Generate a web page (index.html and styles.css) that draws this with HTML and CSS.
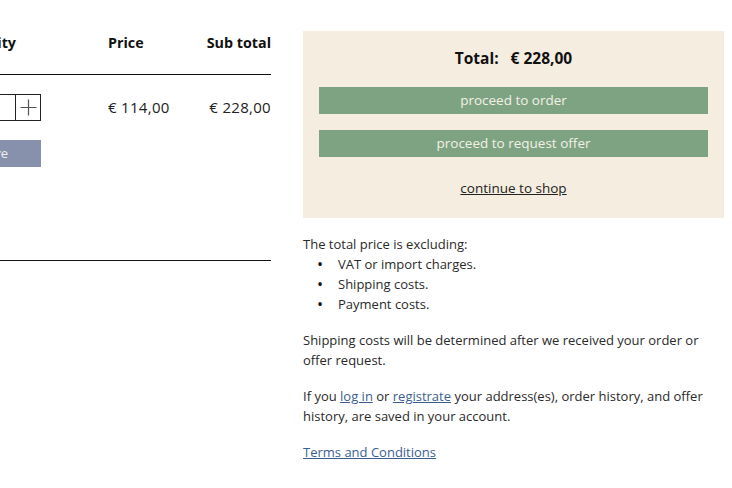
FILE: index.html
```html
<!DOCTYPE html>
<html>
<head>
<meta charset="utf-8">
<link rel="stylesheet" href="styles.css">
</head>
<body>
<div class="page">
  <div class="cart">
    <div class="cart-head">
      <div class="col-qty">Quantity</div>
      <div class="col-price">Price</div>
      <div class="col-sub">Sub total</div>
    </div>
    <div class="cart-row">
      <div class="col-qty">
        <div class="qty-wrap">
          <div class="qty">
            <span class="qty-btn qty-minus">&minus;</span>
            <span class="qty-input">2</span>
            <span class="qty-btn qty-plus"><svg width="17" height="17" viewBox="0 0 17 17"><path d="M8.5 0.5V16.5M0.5 8.5H16.5" stroke="#555" stroke-width="1.2" fill="none"/></svg></span>
          </div>
          <button class="remove">remove</button>
        </div>
      </div>
      <div class="col-price">€ 114,00</div>
      <div class="col-sub">€ 228,00</div>
    </div>
  </div>
  <div class="side">
    <div class="summary">
      <div class="total"><span>Total:</span><span>€ 228,00</span></div>
      <button class="btn-green">proceed to order</button>
      <button class="btn-green">proceed to request offer</button>
      <a class="continue" href="#">continue to shop</a>
    </div>
    <div class="info">
      <p class="intro">The total price is excluding:</p>
      <ul>
        <li>VAT or import charges.</li>
        <li>Shipping costs.</li>
        <li>Payment costs.</li>
      </ul>
      <p>Shipping costs will be determined after we received your order or offer request.</p>
      <p>If you <a href="#">log in</a> or <a href="#">registrate</a> your address(es), order history, and offer history, are saved in your account.</p>
      <p><a href="#">Terms and Conditions</a></p>
    </div>
  </div>
</div>
</body>
</html>
```
FILE: styles.css
```css
html, body {
  margin: 0;
  padding: 0;
  background: #fff;
  overflow: hidden;
}
body {
  font-family: "Open Sans", Arial, sans-serif;
  color: #222;
}
.page {
  display: flex;
  align-items: flex-start;
  padding-top: 31px;
}
.cart {
  width: 331px;
  margin-left: -60px;
  flex: none;
  border-bottom: 1px solid #111;
  height: 229px;
}
.cart-head, .cart-row {
  display: grid;
  grid-template-columns: 168px 97px 66px;
}
.cart-head {
  font-weight: 700;
  font-size: 14.3px;
  line-height: 22px;
  height: 42px;
  padding-top: 1px;
  border-bottom: 1px solid #111;
  color: #111;
}
.cart-head .col-qty {
  text-align: right;
  padding-right: 92px;
}
.cart-head .col-sub, .cart-row .col-sub {
  text-align: right;
  white-space: nowrap;
}
.cart-row {
  padding-top: 19px;
  font-size: 15px;
  line-height: 22px;
  color: #222;
}
.cart-row .col-price, .cart-row .col-sub {
  padding-top: 2px;
  white-space: nowrap;
  letter-spacing: 0.3px;
}
.qty-wrap {
  width: 101px;
}
.qty {
  display: flex;
  height: 27px;
}
.qty-btn, .qty-input {
  box-sizing: border-box;
  border: 1px solid #222;
  display: flex;
  align-items: center;
  justify-content: center;
  font-size: 14px;
}
.qty-minus { width: 30px; }
.qty-input { width: 47px; border-left: none; }
.qty-plus { width: 25px; border-left: none; }
.remove {
  display: block;
  margin-top: 19px;
  width: 101px;
  height: 27px;
  border: none;
  background: #8791ab;
  color: #eef0f4;
  font-family: inherit;
  font-size: 13px;
  text-align: right;
  padding: 0 33px 2px 0;
}
.side {
  margin-left: 32px;
  width: 421px;
  flex: none;
}
.summary {
  background: #f5ede0;
  padding: 16px 16px 20px;
  display: flex;
  flex-direction: column;
  align-items: stretch;
}
.total {
  display: flex;
  justify-content: center;
  gap: 12px;
  font-weight: 700;
  font-size: 15.5px;
  line-height: 22px;
  color: #111;
}
.btn-green {
  margin-top: 18px;
  height: 27px;
  border: none;
  background: #7ea383;
  color: #f3f1e4;
  font-family: inherit;
  font-size: 13.5px;
  padding: 0 0 1px;
}
.btn-green + .btn-green {
  margin-top: 16px;
}
.continue {
  align-self: center;
  margin-top: 21px;
  font-size: 13.5px;
  line-height: 20px;
  color: #222;
}
.info {
  font-size: 13px;
  line-height: 20px;
  color: #2a2a2a;
  padding-top: 16px;
}
.info p {
  margin: 0 0 16px;
}
.info p.intro {
  margin: 0;
}
.info ul {
  margin: 0 0 16px;
  padding-left: 14px;
  list-style: none;
}
.info li {
  display: flex;
}
.info li::before {
  content: "•";
  width: 21px;
  flex: none;
  font-size: 16px;
  color: #111;
}
.info a {
  color: #3b5e92;
}
```
